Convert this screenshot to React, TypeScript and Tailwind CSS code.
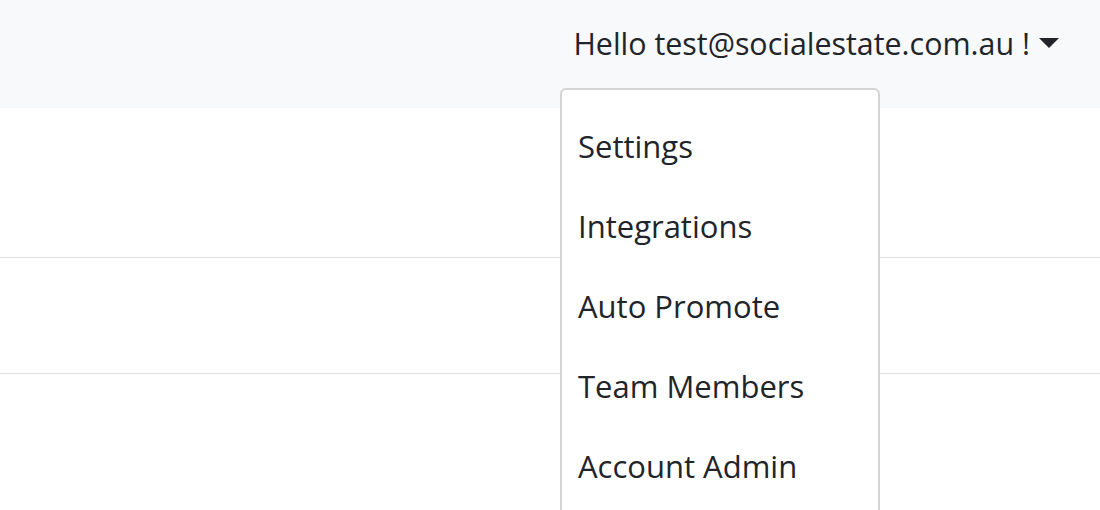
import React from 'react';

const items = ['Settings', 'Integrations', 'Auto Promote', 'Team Members', 'Account Admin'];

const App: React.FC = () => {
  return (
    <div className="relative w-[1100px] h-[510px] overflow-hidden bg-white text-[#212529] font-['Open_Sans',sans-serif]">
      {/* navbar */}
      <nav className="h-[108px] bg-[#f8f9fa] flex items-start justify-end pr-[41px]">
        <button className="flex items-center mt-[21px] text-[30.4px] leading-[46px] text-[#212529]">
          Hello test@socialestate.com.au !
          <span className="ml-[9px] mt-[-2px] w-0 h-0 border-x-[10px] border-x-transparent border-t-[10px] border-t-[#212529]" />
        </button>
      </nav>

      {/* page table lines */}
      <div className="pt-[149px]">
        <div className="border-t border-[#dee2e6] h-[116px]" />
        <div className="border-t border-[#dee2e6]" />
      </div>

      {/* dropdown */}
      <div className="absolute left-[560px] top-[88px] w-[320px] h-[460px] bg-white border-2 border-[#d4d4d4] rounded-[6px] py-[16px]">
        {items.map((item) => (
          <div key={item} className="px-[16px] h-[80px] flex items-center text-[31px] text-[#212529]">
            {item}
          </div>
        ))}
      </div>
    </div>
  );
};

export default App;
